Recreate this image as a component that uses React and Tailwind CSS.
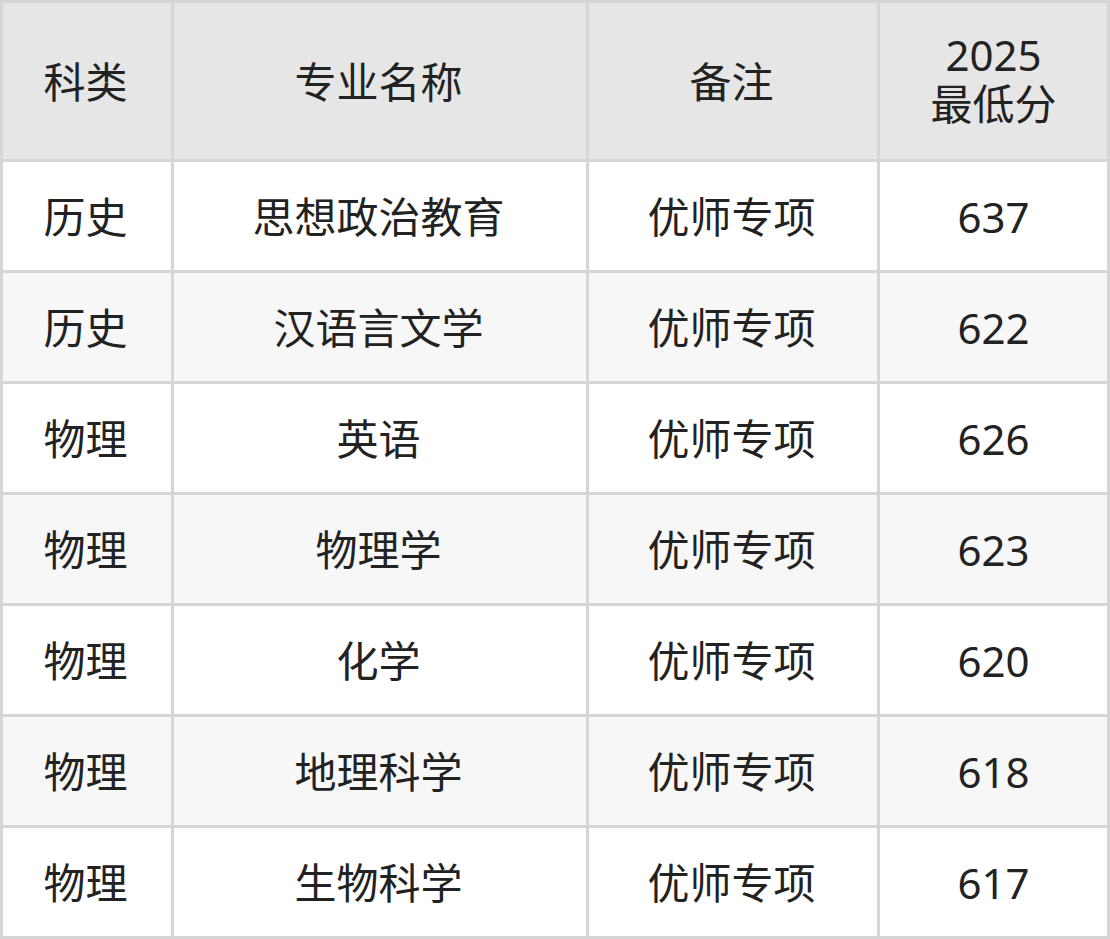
import React from "react";

const rows = [
  ["历史", "思想政治教育", "优师专项", "637"],
  ["历史", "汉语言文学", "优师专项", "622"],
  ["物理", "英语", "优师专项", "626"],
  ["物理", "物理学", "优师专项", "623"],
  ["物理", "化学", "优师专项", "620"],
  ["物理", "地理科学", "优师专项", "618"],
  ["物理", "生物科学", "优师专项", "617"],
];

export default function App() {
  return (
    <div
      className="w-[1110px] h-[939px] bg-[#d6d6d6] p-[3px] text-[#222222] text-[42px]"
      style={{ fontFamily: '"Noto Sans", "Noto Sans CJK SC", sans-serif' }}
    >
      <div className="grid grid-cols-[168px_412px_288px_227px] grid-rows-[156px_repeat(7,108px)] gap-[3px]">
        <div className="bg-[#e6e6e6] flex items-center justify-center pr-[3px]">科类</div>
        <div className="bg-[#e6e6e6] flex items-center justify-center pr-[3px]">专业名称</div>
        <div className="bg-[#e6e6e6] flex items-center justify-center pr-[3px]">备注</div>
        <div className="bg-[#e6e6e6] flex flex-col items-center justify-center leading-[1.15] pb-[3px]">
          <span>2025</span>
          <span>最低分</span>
        </div>
        {rows.map((r, i) =>
          r.map((c, j) => (
            <div
              key={i + "-" + j}
              className={
                (i % 2 === 0 ? "bg-white" : "bg-[#f7f7f7]") +
                (j < 3 ? " pr-[3px]" : "") +
                " flex items-center justify-center"
              }
            >
              {c}
            </div>
          ))
        )}
      </div>
    </div>
  );
}
